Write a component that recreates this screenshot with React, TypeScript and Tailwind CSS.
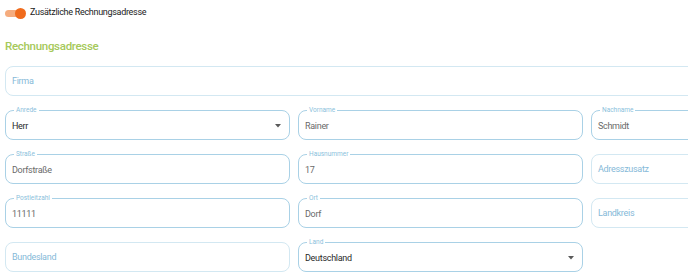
import React from "react";

type FieldProps = {
  label?: string;
  value?: string;
  placeholder?: string;
  select?: boolean;
  className?: string;
};

function Field({ label, value, placeholder, select, className = "" }: FieldProps) {
  const filled = !!label;
  return (
    <div
      className={
        "relative h-[30px] rounded-[8px] border flex items-center pl-[6px] pr-[8px] " +
        (filled ? "border-[#a9d1e6] " : "border-[#d3e8f2] ") +
        className
      }
    >
      {label && (
        <span className="absolute left-[8px] top-[-5px] bg-white px-[2px] text-[6.5px] leading-[8px] text-[#8cbfdc]">
          {label}
        </span>
      )}
      {value ? (
        <span
          className={
            "text-[9px] tracking-[-0.3px] mt-[3px] " +
            (select ? "text-[#2a2a2a]" : "text-[#6a6a6a]")
          }
        >
          {value}
        </span>
      ) : (
        <span className="text-[9px] tracking-[-0.3px] mt-[1px] text-[#85b9d8]">
          {placeholder}
        </span>
      )}
      {select && (
        <svg
          className="absolute right-[8px] top-[13px]"
          width="6"
          height="4"
          viewBox="0 0 6 4"
        >
          <path d="M0 0 L6 0 L3 3.5 Z" fill="#5a5a5a" />
        </svg>
      )}
    </div>
  );
}

export default function App() {
  return (
    <div
      className="w-[688px] h-[277px] overflow-hidden bg-white"
      style={{ fontFamily: "Roboto, 'Liberation Sans', sans-serif" }}
    >
      <div className="w-[900px] pl-[5px]">
        <div className="flex items-center h-[24px] pt-[2px]">
          <div className="relative w-[20px] h-[12px] flex items-center">
            <div className="w-[18px] h-[7px] rounded-full bg-[#f5ac7e]" />
            <div className="absolute left-[10px] top-[0.5px] w-[11px] h-[11px] rounded-full bg-[#f06b1c]" />
          </div>
          <span className="ml-[5px] text-[9px] tracking-[-0.3px] text-[#222222]">
            Zusätzliche Rechnungsadresse
          </span>
        </div>
        <div className="mt-[16px] h-[14px] flex items-center text-[11.5px] tracking-[-0.3px] font-medium text-[#a6c95a]">
          Rechnungsadresse
        </div>
        <div className="mt-[12px] flex flex-col gap-[14px]">
          <Field placeholder="Firma" className="w-[871px]" />
          <div className="grid grid-cols-[285px_285px_285px] gap-x-[8px] gap-y-[14px]">
            <Field label="Anrede" value="Herr" select />
            <Field label="Vorname" value="Rainer" />
            <Field label="Nachname" value="Schmidt" />
            <Field label="Straße" value="Dorfstraße" />
            <Field label="Hausnummer" value="17" />
            <Field placeholder="Adresszusatz" />
            <Field label="Postleitzahl" value="11111" />
            <Field label="Ort" value="Dorf" />
            <Field placeholder="Landkreis" />
            <Field placeholder="Bundesland" />
            <Field label="Land" value="Deutschland" select />
          </div>
        </div>
      </div>
    </div>
  );
}
